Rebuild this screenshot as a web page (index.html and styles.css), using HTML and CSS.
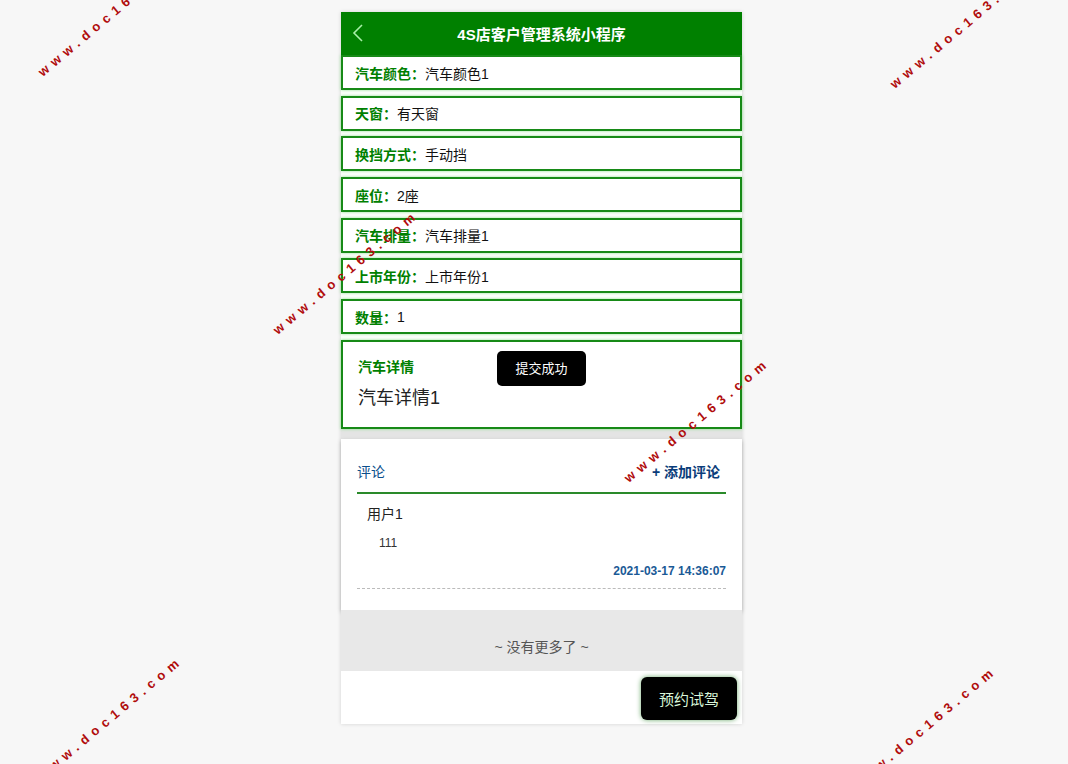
FILE: index.html
```html
<!DOCTYPE html>
<html lang="zh-CN">

<head>
  <meta charset="UTF-8">
  <meta name="viewport" content="width=device-width, initial-scale=1.0">
  <title>4S店客户管理系统小程序</title>
  <link rel="stylesheet" href="styles.css">
</head>

<body>
  <div class="page">
    <div class="header">
      <span class="back">
        <svg width="14" height="20" viewBox="0 0 14 20">
          <polyline points="11,2 3,10 11,18" fill="none" stroke="#a8f0a8" stroke-width="1.6" />
        </svg>
      </span>
      <span class="title">4S店客户管理系统小程序</span>
    </div>

    <div class="fields">
      <div class="field"><span class="label">汽车颜色：</span>汽车颜色1</div>
      <div class="field"><span class="label">天窗：</span>有天窗</div>
      <div class="field"><span class="label">换挡方式：</span>手动挡</div>
      <div class="field"><span class="label">座位：</span>2座</div>
      <div class="field"><span class="label">汽车排量：</span>汽车排量1</div>
      <div class="field"><span class="label">上市年份：</span>上市年份1</div>
      <div class="field"><span class="label">数量：</span>1</div>
      <div class="detail">
        <div class="label">汽车详情</div>
        <div class="detail-text">汽车详情1</div>
      </div>
    </div>

    <div class="comments-wrap">
      <div class="comments">
        <div class="comments-head">
          <span class="comments-title">评论</span>
          <span class="add">+ 添加评论</span>
        </div>
        <div class="comment">
          <div class="user">用户1</div>
          <div class="content">111</div>
          <div class="time">2021-03-17 14:36:07</div>
        </div>
      </div>
    </div>

    <div class="no-more">~ 没有更多了 ~</div>

    <div class="footer">
      <button class="book">预约试驾</button>
    </div>

    <div class="toast">提交成功</div>
  </div>

  <!-- watermarks -->
  <div class="wm wm1">www.doc163.com</div>
  <div class="wm wm2">www.doc163.com</div>
  <div class="wm wm3">www.doc163.com</div>
  <div class="wm wm4">www.doc163.com</div>
  <div class="wm wm5">www.doc163.com</div>
  <div class="wm wm6">www.doc163.com</div>
</body>

</html>
```

FILE: styles.css
```css
body {
  margin: 0;
  padding-left: 15px;
  background: #f7f7f7;
  font-family: Arial, "Liberation Sans", "Noto Sans CJK SC", sans-serif;
  color: #111;
  height: 764px;
  overflow: hidden;
}

.page {
  position: relative;
  width: 401px;
  margin: 12px auto 0;
  background: #fff;
  box-shadow: 0 0 4px rgba(0, 0, 0, 0.15);
}

.header {
  height: 43px;
  background: #008000;
  display: flex;
  align-items: center;
  justify-content: center;
  position: relative;
}

.back {
  position: absolute;
  left: 10px;
  top: 11px;
}

.title {
  color: #fff;
  font-size: 15px;
  font-weight: bold;
}

.fields {
  display: flex;
  flex-direction: column;
  gap: 5.7px;
}

.field {
  height: 35px;
  box-sizing: border-box;
  border: 2px solid #178a17;
  box-shadow: 0 0 3px #8ee08e;
  padding-left: 12px;
  display: flex;
  align-items: center;
  font-size: 14px;
}

.label {
  color: #008000;
  font-weight: bold;
  font-size: 14px;
}

.detail {
  height: 89px;
  box-sizing: border-box;
  border: 2px solid #178a17;
  box-shadow: 0 0 3px #8ee08e;
  padding: 14px 15px 0;
}

.detail-text {
  margin-top: 7px;
  font-size: 18px;
  color: #222;
}

.comments-wrap {
  background: #e4e4e4;
  padding-top: 10px;
}

.comments {
  background: #fff;
  padding: 20px 16px 21px;
  box-shadow: 0 2px 4px rgba(0, 0, 0, 0.25);
}

.comments-head {
  display: flex;
  justify-content: space-between;
  align-items: center;
  line-height: 26px;
  padding-bottom: 7px;
  border-bottom: 2px solid #2a8a2a;
}

.comments-title {
  color: #0b4f8c;
  font-size: 14px;
}

.add {
  color: #0a3d7a;
  font-size: 14px;
  font-weight: bold;
  margin-right: 6px;
}

.comment {
  border-bottom: 1px dashed #bbb;
  padding-bottom: 7px;
}

.user {
  margin-top: 10px;
  line-height: 20px;
  padding-left: 10px;
  font-size: 14px;
  color: #222;
}

.content {
  margin-top: 9px;
  line-height: 20px;
  padding-left: 22px;
  font-size: 12px;
  color: #333;
}

.time {
  margin-top: 8px;
  line-height: 20px;
  text-align: right;
  font-size: 12px;
  font-weight: bold;
  color: #1a5a96;
}

.no-more {
  height: 61px;
  box-sizing: border-box;
  background: #e8e8e8;
  text-align: center;
  padding-top: 25px;
  line-height: 24px;
  font-size: 14px;
  color: #555;
}

.footer {
  height: 53px;
  box-sizing: border-box;
  padding: 6px 5px 0 0;
  display: flex;
  justify-content: flex-end;
}

.book {
  width: 96px;
  height: 43px;
  background: #000;
  color: #d8f5d8;
  border: none;
  border-radius: 6px;
  font-size: 15px;
  font-family: inherit;
  box-shadow: 0 0 5px #6aa86a;
}

.toast {
  position: absolute;
  left: 156px;
  top: 339px;
  width: 89px;
  height: 35px;
  line-height: 35px;
  background: #000;
  color: #fff;
  text-align: center;
  font-size: 13px;
  border-radius: 5px;
}

.wm {
  position: absolute;
  color: #b00c0c;
  font-size: 13px;
  font-weight: bold;
  letter-spacing: 5.5px;
  white-space: nowrap;
  transform: translate(-50%, -50%) rotate(-40deg);
}

.wm1 { left: 111px; top: 14px; }
.wm2 { left: 963px; top: 26px; }
.wm3 { left: 346px; top: 272px; }
.wm4 { left: 697px; top: 420px; }
.wm5 { left: 110px; top: 718px; }
.wm6 { left: 924px; top: 728px; }
```
